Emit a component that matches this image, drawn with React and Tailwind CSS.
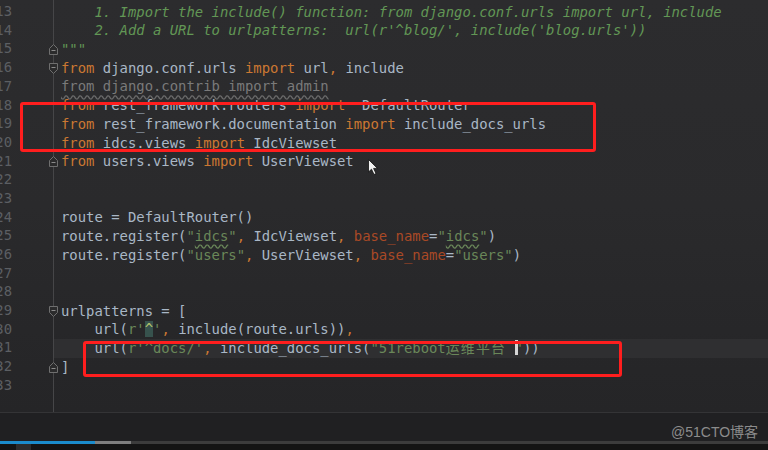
import React from "react";

const K = ({ children }) => <span className="text-[#cc7832]">{children}</span>;
const S = ({ children }) => <span className="text-[#6a8759]">{children}</span>;
const A = ({ children }) => <span className="text-[#aa4926]">{children}</span>;
const C = ({ children }) => <span className="italic text-[#629755]">{children}</span>;
const W = ({ children }) => (
  <span className="underline decoration-wavy decoration-[#6a8759] underline-offset-[3px]">{children}</span>
);

function FoldStart() {
  return (
    <svg width="9" height="11" viewBox="0 0 9 11" className="relative z-10 -mr-[5px]">
      <path d="M0.5 0.5H8.5V6.5L4.5 10.5L0.5 6.5Z" fill="#2b2b2c" stroke="#6f6f6f" />
      <path d="M2.5 4.5H6.5" stroke="#8a8a8a" />
    </svg>
  );
}
function FoldEnd() {
  return (
    <svg width="9" height="11" viewBox="0 0 9 11" className="relative z-10 -mr-[5px]">
      <path d="M0.5 10.5H8.5V4.5L4.5 0.5L0.5 4.5Z" fill="#2b2b2c" stroke="#6f6f6f" />
      <path d="M2.5 6.5H6.5" stroke="#8a8a8a" />
    </svg>
  );
}

const rows = [
  {
    n: 12,
    code: (
      <>
        {"                       "}
        <span className="text-transparent underline decoration-wavy decoration-[#5f5f5f] underline-offset-[-1px]">xxxx</span>
      </>
    ),
  },
  { n: 13, code: <C>{"    1. Import the include() function: from django.conf.urls import url, include"}</C> },
  { n: 14, code: <C>{"    2. Add a URL to urlpatterns:  url(r'^blog/', include('blog.urls'))"}</C> },
  { n: 15, fold: "end", code: <C>{'"""'}</C> },
  {
    n: 16,
    fold: "start",
    code: (
      <>
        <K>from</K> django.conf.urls <K>import</K> url<K>,</K> include
      </>
    ),
  },
  {
    n: 17,
    code: (
      <span className="text-[#7a7a7a] underline decoration-wavy decoration-[#6a6a6a] underline-offset-[3px]">
        from django.contrib import admin
      </span>
    ),
  },
  {
    n: 18,
    code: (
      <>
        <K>from</K> rest_framework.routers <K>import</K>{"  "}DefaultRouter
      </>
    ),
  },
  {
    n: 19,
    code: (
      <>
        <K>from</K> rest_framework.documentation <K>import</K> include_docs_urls
      </>
    ),
  },
  {
    n: 20,
    code: (
      <>
        <K>from</K> idcs.views <K>import</K> IdcViewset
      </>
    ),
  },
  {
    n: 21,
    fold: "end",
    code: (
      <>
        <K>from</K> users.views <K>import</K> UserViewset
      </>
    ),
  },
  { n: 22, code: "" },
  { n: 23, code: "" },
  { n: 24, code: "route = DefaultRouter()" },
  {
    n: 25,
    code: (
      <>
        route.register(<S>"<W>idcs</W>"</S><K>,</K> IdcViewset<K>,</K> <A>base_name</A>=<S>"<W>idcs</W>"</S>)
      </>
    ),
  },
  {
    n: 26,
    code: (
      <>
        route.register(<S>"users"</S><K>,</K> UserViewset<K>,</K> <A>base_name</A>=<S>"users"</S>)
      </>
    ),
  },
  { n: 27, code: "" },
  { n: 28, code: "" },
  { n: 29, fold: "start", code: "urlpatterns = [" },
  {
    n: 30,
    code: (
      <>
        {"    url("}
        <S>
          r'<span className="bg-[#37524d] text-[#b5c26a]">^</span>'
        </S>
        <K>,</K> include(route.urls))<K>,</K>
      </>
    ),
  },
  {
    n: 31,
    hl: true,
    code: (
      <>
        {"    url("}
        <S>r'^docs/'</S>
        <K>,</K> include_docs_urls(
        <S>
          "51reboot<span className="tracking-[1.2px]">运维平台</span>{" "}
        </S>
        <span className="relative inline-block w-[3px] h-[15px] -mr-[3px] align-[-2px] bg-[#d6d6d6]" />
        <S>"</S>))
      </>
    ),
  },
  { n: 32, fold: "end", code: "]" },
  { n: 33, code: "" },
];

export default function App() {
  return (
    <div className="relative w-[768px] h-[450px] overflow-hidden bg-[#141414] font-['DejaVu_Sans_Mono','Noto_Sans_CJK_SC',monospace] text-[13.9px] text-[#a9b7c6]">
      <div className="flex h-[413px] overflow-hidden border-b border-[#343436] bg-linear-to-b from-[#2c2c2e] via-[#2a2a2c] to-[#252527]">
        <div className="w-[54px] shrink-0 border-r border-[#464648]">
          <div className="-mt-[16px]">
            {rows.map((r) => (
              <div key={r.n} className="flex h-[18.7px] items-center">
                <div className="flex w-[12px] justify-end text-[#5c5f63] leading-none">{r.n}</div>
                <div className="flex flex-1 justify-end">
                  {r.fold === "start" && <FoldStart />}
                  {r.fold === "end" && <FoldEnd />}
                </div>
              </div>
            ))}
          </div>
        </div>
        <div className="flex-1">
          <div className="-mt-[16px]">
            {rows.map((r) => (
              <div
                key={r.n}
                className={`h-[18.7px] whitespace-pre pl-[7px] leading-[18.7px] ${r.hl ? "bg-[#2f2f31]" : ""}`}
              >
                {r.code}
              </div>
            ))}
          </div>
        </div>
      </div>
      <div className="h-[28px] bg-[#202022]" />
      <div className="flex h-[3px]">
        <div className="w-[95px] bg-[#1b8ccc]" />
        <div className="w-[36px] bg-[#7e7e7e]" />
        <div className="flex-1 bg-[#3c3c3c]" />
      </div>
      <div className="flex h-[6px] items-start pl-[16px]">
        <div className="h-[6px] w-[15px] bg-[#2c2c2c]" />
      </div>

      {/* annotation boxes */}
      <div className="absolute left-[20px] top-[102px] h-[50px] w-[576px] rounded-[3px] border-[3px] border-[#ff1e1e]" />
      <div className="absolute left-[83px] top-[341px] h-[36px] w-[539px] rounded-[3px] border-[3px] border-[#ff1e1e]" />

      {/* mouse pointer */}
      <svg className="absolute left-[368px] top-[159px]" width="11" height="17" viewBox="0 0 11 17">
        <path d="M0.5 0.5V13L3.5 10.2L6 15.5L8 14.6L5.6 9.4H9.5Z" fill="#f2f2f2" stroke="#111" strokeWidth="0.8" />
      </svg>

      {/* watermark */}
      <div className="absolute left-[671px] top-[424px] font-['Liberation_Sans','Noto_Sans_CJK_SC',sans-serif] text-[14px] leading-[16px] text-[#8c8c8c]">
        @51CTO博客
      </div>
    </div>
  );
}
